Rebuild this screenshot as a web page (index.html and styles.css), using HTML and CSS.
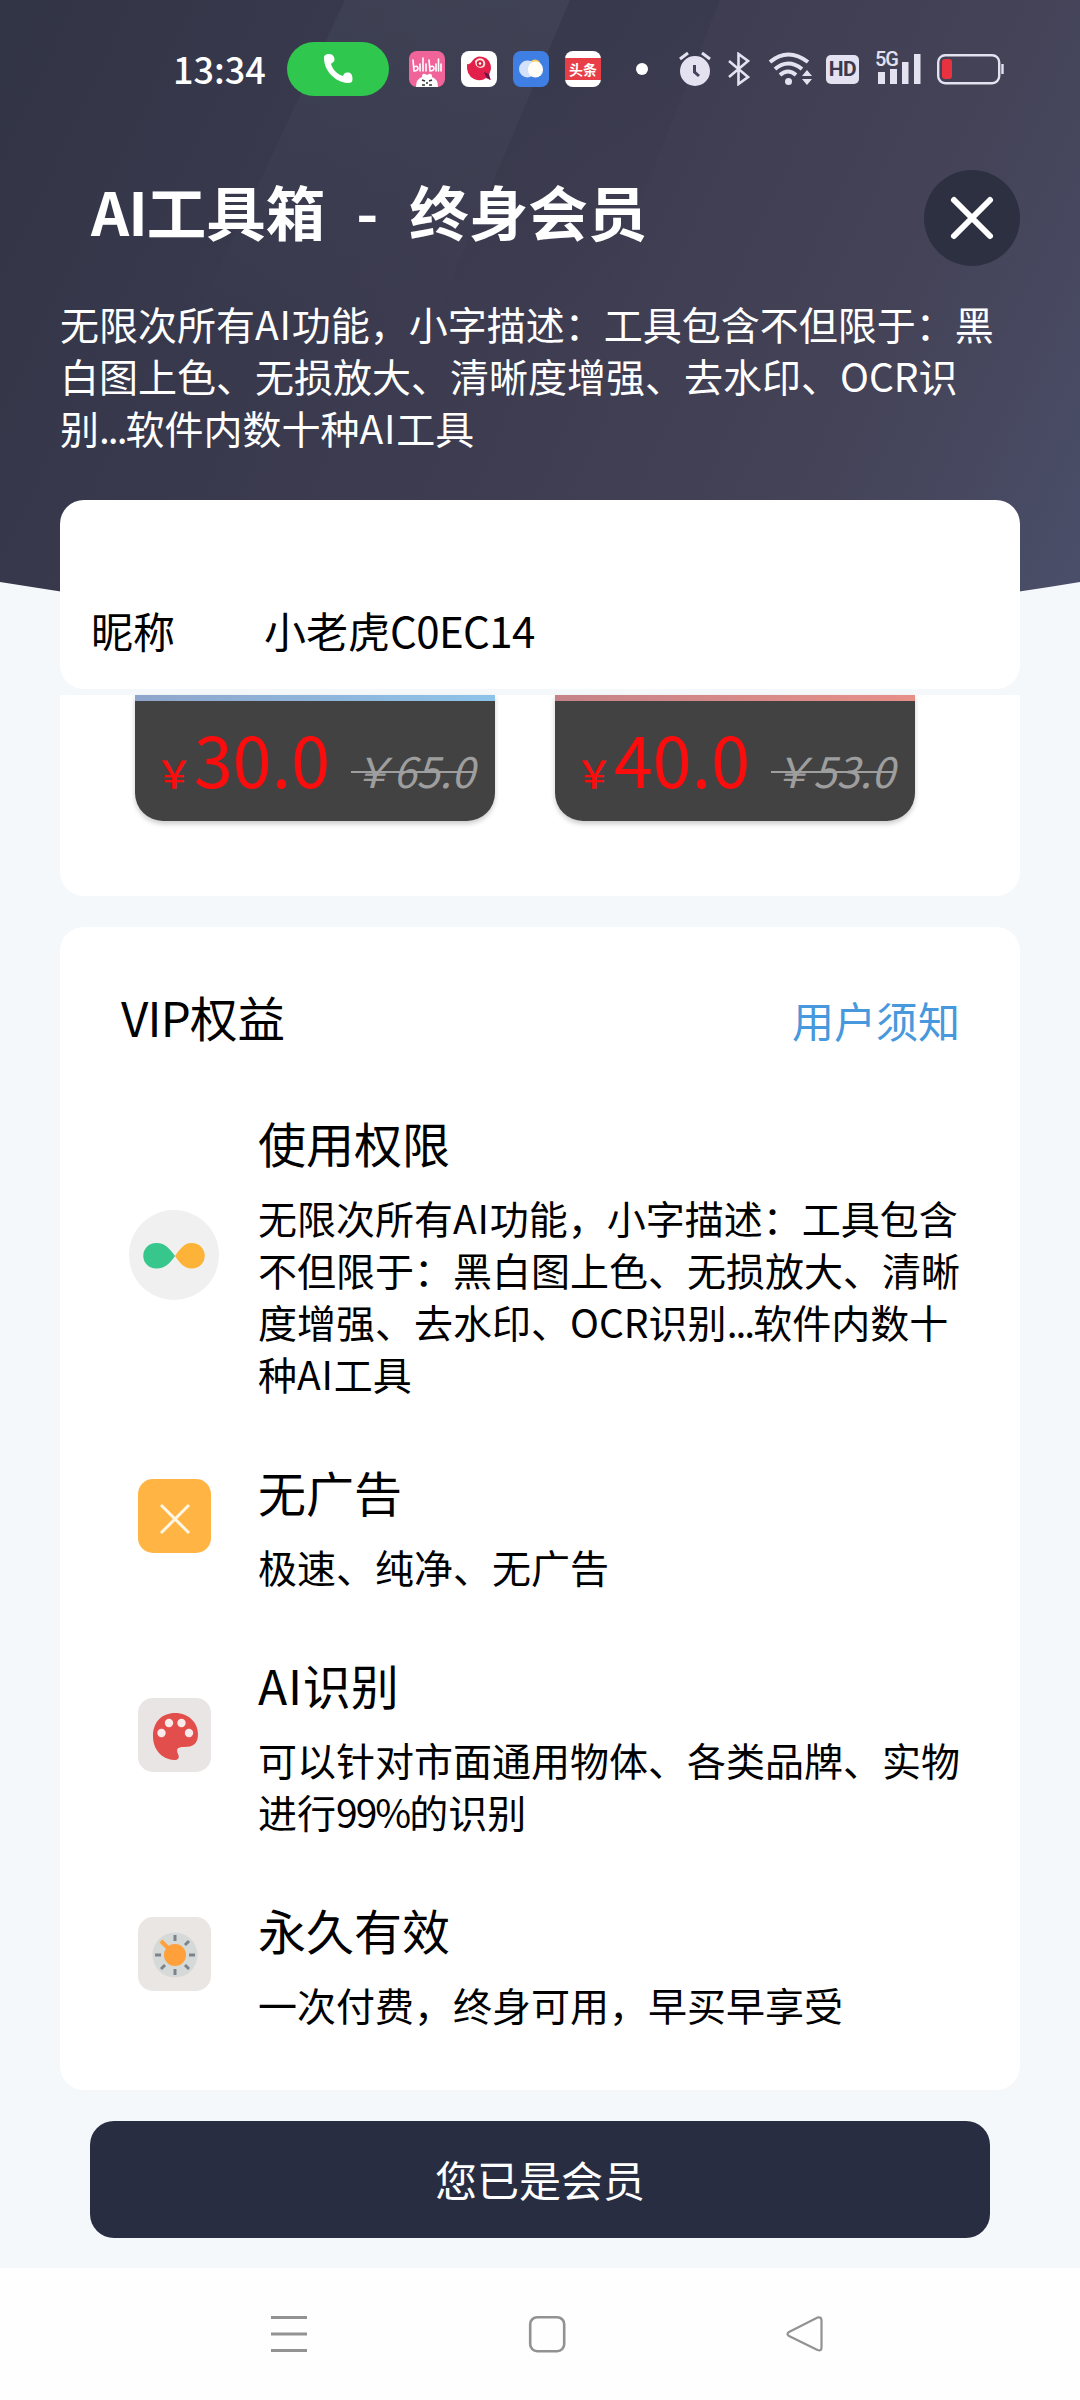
FILE: index.html
```
<!DOCTYPE html>
<html lang="zh-CN">
<head>
<meta charset="utf-8">
<title>AI工具箱 - 终身会员</title>
<link rel="stylesheet" href="styles.css">
</head>
<body>
<div class="page">
  <svg class="backdrop" width="1080" height="640" viewBox="0 0 1080 640">
    <defs>
      <linearGradient id="night" gradientUnits="userSpaceOnUse" x1="0" y1="60" x2="1080" y2="560">
        <stop offset="0" stop-color="#323545"/>
        <stop offset=".2" stop-color="#37384c"/>
        <stop offset=".5" stop-color="#3e3c51"/>
        <stop offset=".78" stop-color="#444358"/>
        <stop offset="1" stop-color="#4a4e68"/>
      </linearGradient>
      <linearGradient id="beam" x1="0" y1="0" x2="0" y2="1">
        <stop offset="0" stop-color="#49505f" stop-opacity=".3"/>
        <stop offset="1" stop-color="#49505f" stop-opacity="0"/>
      </linearGradient>
      <linearGradient id="shade" x1="0" y1="0" x2="0" y2="1">
        <stop offset="0" stop-color="#2f3446" stop-opacity=".3"/>
        <stop offset="1" stop-color="#2f3446" stop-opacity="0"/>
      </linearGradient>
    </defs>
    <path fill="url(#night)" d="M0 0H1080V582Q540 672 0 582Z"/>
    <path fill="url(#beam)" d="M345 0H570L430 330H190Z"/>
    <path fill="url(#shade)" d="M570 0H720L590 330H430Z"/>
  </svg>

  <div class="status">
    <span class="clock">13:34</span>
    <span class="call">
      <svg width="30" height="30" viewBox="0 0 30 30"><path fill="#fff" d="M1 4C1 1 3 0 6 0C10 0 11.500 3 11.500 6C11.500 8 9 8.500 8 10C10 16 14 20 20 22C21 19 23 18 25 18.500C28 18.500 29.500 21 29.500 25C29.500 28 28 29 25 29C12 28 1 17 1 4Z"/></svg>
    </span>
    <span class="apps">
      <svg width="36" height="36" viewBox="0 0 36 36">
        <rect width="36" height="36" rx="8" fill="#f0649a"/>
        <g fill="none" stroke="#fff" stroke-width="1.600" stroke-linecap="round"><path d="M4 9L5 20Q9 20 9 17Q8 14 5 16M11 13V20M14 7V20M17 13V20M20 9L21 20Q25 20 25 17Q24 14 21 16M27 13V20M29.500 8V20M32 13V20"/></g>
        <path fill="#fff" d="M7 36Q7 28 13 26Q13 22 16 23L18 24L20 23Q23 22 23 26Q29 28 29 36Z"/>
        <path stroke="#333" stroke-width="1.500" fill="none" d="M13 29L16 30M23 29L20 30M13 34H16M20 34H23M17 32H19"/>
      </svg>
      <svg width="36" height="36" viewBox="0 0 36 36">
        <rect width="36" height="36" rx="8" fill="#fff"/>
        <path fill="#e2204a" d="M6 13Q9 14 12 9Q16 4 22 6Q30 8 30 18L28 24L30 29L25 27Q20 31 13 28Q5 24 6 13Z"/>
        <path fill="#fbe3d8" d="M14 10Q17 6 22 8Q26 12 23 16L20 17Q14 17 14 10Z"/>
        <circle cx="19" cy="12.500" r="3.200" fill="#d71f42"/><circle cx="19" cy="12.500" r="1.300" fill="#fff"/>
        <path fill="#6d1748" d="M23 21L28 23L29 29L25 26Z"/>
      </svg>
      <svg width="36" height="36" viewBox="0 0 36 36">
        <rect width="36" height="36" rx="8" fill="#3f7fe4"/>
        <circle cx="22" cy="14" r="5.500" fill="#f9cf5a"/>
        <circle cx="14.500" cy="18" r="8.500" fill="#d4e1fa"/>
        <rect x="15" y="10.500" width="15" height="16" rx="7.500" fill="#fffdf5"/>
      </svg>
      <span class="news"><b>头条</b></span>
    </span>
    <span class="dot"></span>
    <svg class="alarm" width="32" height="36" viewBox="0 0 32 36">
      <circle cx="16" cy="20" r="15" fill="#e4e2f0"/>
      <path d="M1 8L9 2M31 8L23 2" stroke="#e4e2f0" stroke-width="3" fill="none"/>
      <path d="M15.500 14V21L20 25" stroke="#45435a" stroke-width="3" fill="none"/>
    </svg>
    <svg class="bt" width="22" height="34" viewBox="0 0 22 34">
      <path d="M1 9L20 25L10.500 32V2L20 9L1 25" fill="none" stroke="#e4e2f0" stroke-width="2.600"/>
    </svg>
    <svg class="wifi" width="46" height="36" viewBox="0 0 46 36">
      <g fill="none" stroke="#e4e2f0" stroke-width="4"><path d="M2 11Q20-4 40 11M7 18Q20 7 34 18M12 24Q20 17 28 24"/></g>
      <circle cx="20.500" cy="30.500" r="3.500" fill="#e4e2f0"/>
      <path fill="#e4e2f0" d="M34 25L39 19L44 25ZM34 28H44L39 34Z"/>
    </svg>
    <span class="hd">HD</span>
    <span class="cell">
      <span class="gen">5G</span>
      <svg width="46" height="34" viewBox="0 0 46 34"><path fill="#e4e2f0" d="M3 20H10V32H3ZM15 17H22V32H15ZM27 10H33.500V32H27ZM39 2H45.500V32H39Z"/></svg>
    </span>
    <svg class="battery" width="68" height="32" viewBox="0 0 68 32">
      <rect x="1.200" y="2.200" width="61" height="28" rx="7" fill="none" stroke="#e4e2f0" stroke-width="2.400"/>
      <path d="M65.500 11V21" stroke="#e4e2f0" stroke-width="2.400"/>
      <rect x="5" y="6" width="10" height="20" rx="3" fill="#e8323f"/>
    </svg>
  </div>

  <header class="head">
    <h1><span class="lat">AI</span>工具箱<i class="dash">-</i>终身会员</h1>
    <span class="close">
      <svg width="48" height="48" viewBox="0 0 48 48"><path d="M6 6L42 42M42 6L6 42" stroke="#fff" stroke-width="6" stroke-linecap="round"/></svg>
    </span>
  </header>

  <p class="intro">无限次所有<span class="lat">AI</span>功能，小字描述：工具包含不但限于：黑<br>白图上色、无损放大、清晰度增强、去水印、<span class="ocr">OCR</span>识<br>别<span class="dots">...</span>软件内数十种<span class="lat">AI</span>工具</p>

  <section class="card profile">
    <span class="label">昵称</span><span class="nick">小老虎<span class="code">C0EC14</span></span>
  </section>

  <section class="card plans">
    <div class="plan plan-blue"><span class="yen">￥</span><span class="price">30.0</span><s>￥65.0</s></div>
    <div class="plan plan-red"><span class="yen">￥</span><span class="price">40.0</span><s>￥53.0</s></div>
  </section>

  <section class="card benefits">
    <div class="bar"><h2><span class="vip">VIP</span>权益</h2><a>用户须知</a></div>
    <div class="item item-round">
      <svg class="icon" width="90" height="90" viewBox="0 0 90 90">
        <circle cx="45" cy="45" r="45" fill="#f0f0f0"/>
        <path fill="#37c78d" d="M46 46C40 55 34 59 27 58.500A12.500 12.500 0 0 1 27 33C34 32.500 40 37 46 46Z"/>
        <path fill="#fdb337" d="M46 46C52 55 57 59 63 58.500A12.500 12.500 0 0 0 63 33C57 32.500 52 37 46 46Z"/>
      </svg>
      <div class="text"><h3>使用权限</h3><p>无限次所有<span class="lat">AI</span>功能，小字描述：工具包含<br>不但限于：黑白图上色、无损放大、清晰<br>度增强、去水印、<span class="ocr">OCR</span>识别<span class="dots">...</span>软件内数十<br>种<span class="lat">AI</span>工具</p></div>
    </div>
    <div class="item">
      <svg class="icon" width="73" height="74" viewBox="0 0 73 74">
        <rect width="73" height="74" rx="15" fill="#ffb443"/>
        <path d="M23 26L51 54M51 26L23 54" stroke="#fff6e6" stroke-width="3"/>
      </svg>
      <div class="text"><h3>无广告</h3><p>极速、纯净、无广告</p></div>
    </div>
    <div class="item">
      <svg class="icon" width="73" height="74" viewBox="0 0 73 74">
        <rect width="73" height="74" rx="15" fill="#e8e5e4"/>
        <path fill="#e24e4c" d="M37 15C51 15 60 25 60 36C60 46 55 49 46 49C39 49 38 51 40 56C42 60 40 62 36 62C23 61 15 51 15 38C15 24 24 15 37 15Z"/>
        <g fill="#fbeaea"><circle cx="31" cy="25" r="4.200"/><circle cx="43.500" cy="25" r="4.200"/><circle cx="23.500" cy="35" r="4.200"/><circle cx="51" cy="35" r="4.200"/></g>
      </svg>
      <div class="text"><h3><span class="lat">AI</span>识别</h3><p>可以针对市面通用物体、各类品牌、实物<br>进行<span class="num">99%</span>的识别</p></div>
    </div>
    <div class="item">
      <svg class="icon" width="73" height="74" viewBox="0 0 73 74">
        <rect width="73" height="74" rx="15" fill="#e9e6e4"/>
        <circle cx="37" cy="38" r="22.500" fill="#d5d9d8"/>
        <g stroke="#7d838c" stroke-width="3"><path d="M37 18V24M37 52V58M17 38H23M51 38H57M51 24L47 28M47 48L51 52M27 48L23 52"/></g>
        <path d="M23 24L31 32" stroke="#ffa03a" stroke-width="4"/>
        <circle cx="37" cy="38" r="11" fill="#ffa03a"/>
      </svg>
      <div class="text"><h3>永久有效</h3><p>一次付费，终身可用，早买早享受</p></div>
    </div>
  </section>

  <div class="action">您已是会员</div>

  <nav class="nav">
    <svg width="38" height="40" viewBox="0 0 38 40"><path d="M1 3.500H37M1 20H37M1 36.500H37" stroke="#929292" stroke-width="3"/></svg>
    <svg width="38" height="40" viewBox="0 0 38 40"><rect x="2.200" y="3.200" width="34" height="34" rx="7" fill="none" stroke="#929292" stroke-width="2.600"/></svg>
    <svg width="38" height="40" viewBox="0 0 38 40"><path d="M3 18L31.500 3.500Q35.500 2.500 35.500 6.500V33.500Q35.500 37.500 31.500 36L3 22Q0 20 3 18Z" fill="none" stroke="#929292" stroke-width="2.200"/></svg>
  </nav>
</div>
</body>
</html>
```
FILE: styles.css
```
* { box-sizing: border-box; margin: 0; padding: 0; }
body { font-family: "Noto Sans CJK SC", sans-serif; color: #000; background: #f5f7fb; }
svg { display: block; flex: none; }
h1, h2, h3 { font-weight: 400; }

.page { position: relative; width: 1080px; height: 2400px; display: flex; flex-direction: column; overflow: hidden; background: #f5f8fb; }
.page > * { flex: none; position: relative; white-space: nowrap; }
.page > .backdrop { position: absolute; left: 0; top: 0; }

/* status bar */
.status { height: 138px; display: flex; align-items: center; padding-left: 173px; }
.clock { width: 114px; padding-bottom: 2px; color: #fff; font-size: 36px; font-weight: 500; line-height: 48px; }
.call { width: 102px; height: 54px; border-radius: 27px; background: #30c74f; display: flex; align-items: center; justify-content: center; }
.apps { display: flex; gap: 16px; margin-left: 20px; }
.news { width: 36px; height: 36px; border-radius: 8px; background: linear-gradient(#fff 7px, #e83e48 7px, #e83e48 29px, #fff 29px); color: #fff; display: flex; align-items: center; justify-content: center; font-size: 14px; line-height: 20px; }
.dot { width: 12px; height: 12px; border-radius: 6px; background: #fff; margin-left: 35px; }
.alarm { margin-left: 31px; }
.bt { margin-left: 17px; }
.wifi { margin-left: 18px; }
.hd { margin-left: 12px; width: 33px; height: 29px; border-radius: 5px; background: #e4e2f0; color: #3b3a4c; font: bold 21px/29px Roboto, sans-serif; text-align: center; letter-spacing: -.5px; }
.cell { position: relative; margin-left: 16px; }
.gen { position: absolute; left: 0; top: -3px; color: #e4e2f0; font: 500 20px/20px Roboto, sans-serif; letter-spacing: -1px; }
.battery { margin-left: 16px; }

/* header */
.head { height: 159px; display: flex; justify-content: space-between; padding: 32px 60px 0 91px; color: #fff; }
.head h1 { font-size: 59.5px; font-weight: 700; line-height: 80px; }
.head .lat { letter-spacing: -1px; }
.dash { display: inline-block; width: 84px; text-align: center; font-style: normal; }
.close { width: 96px; height: 96px; border-radius: 48px; background: #2c3040; display: flex; align-items: center; justify-content: center; }
.intro { height: 203px; padding-left: 60px; color: #fff; font-size: 39px; line-height: 52px; }
.lat { letter-spacing: .8px; }
.ocr { letter-spacing: 0; }
.vip { letter-spacing: -.8px; }
.num { letter-spacing: -2px; }
.dots { letter-spacing: -2px; }

/* cards */
.card { width: 960px; margin-left: 60px; background: #fff; border-radius: 24px; }
.profile { height: 189px; display: flex; padding: 100px 0 0 31px; font-size: 42px; line-height: 60px; }
.label { width: 173px; }
.code { letter-spacing: -.6px; }
.plans { height: 201px; margin-top: 6px; border-radius: 0 0 24px 24px; display: flex; gap: 60px; padding-left: 75px; }
.plan { width: 360px; height: 126px; border-top: 6px solid; border-radius: 0 0 28px 28px; background: #424242; box-shadow: 0 3px 5px rgba(0,0,0,.2); display: flex; align-items: baseline; padding: 7px 0 0 20px; line-height: 100px; overflow: hidden; }
.plan-blue { border-image: linear-gradient(90deg, #8fa5cb, #8ec4ea) 1; }
.plan-red { border-image: linear-gradient(90deg, #c58388, #e88f89) 1; }
.yen { width: 39px; color: #fb0d0d; font-size: 38px; font-weight: 500; }
.price { width: 157px; color: #fb0d0d; font-size: 70px; }
.plan s { width: 127px; color: #9e9e9e; font-size: 42px; font-style: italic; text-decoration-thickness: 2px; }

.benefits { height: 1163px; margin-top: 31px; padding: 53px 60px 0 58px; }
.bar { height: 131px; display: flex; justify-content: space-between; padding-left: 3px; }
.bar h2 { font-size: 47.5px; line-height: 73px; }
.bar a { font-size: 42px; line-height: 79px; color: #4798dc; }
.item { display: grid; grid-template-columns: 112px 1fr; column-gap: 28px; align-items: center; margin-bottom: 61px; }
.icon { justify-self: center; margin-bottom: 21px; }
.item-round .icon { margin-bottom: 0; }
.item h3 { font-size: 48px; line-height: 63px; margin-bottom: 17px; }
.item p { font-size: 39px; line-height: 52px; }

/* bottom */
.action { width: 900px; height: 117px; margin: 31px 0 30px 90px; border-radius: 24px; background: #282d42; color: #fff; font-size: 42px; line-height: 115px; text-align: center; }
.nav { height: 132px; background: #fefefe; display: flex; gap: 220px; padding: 46px 0 0 270px; }
```
